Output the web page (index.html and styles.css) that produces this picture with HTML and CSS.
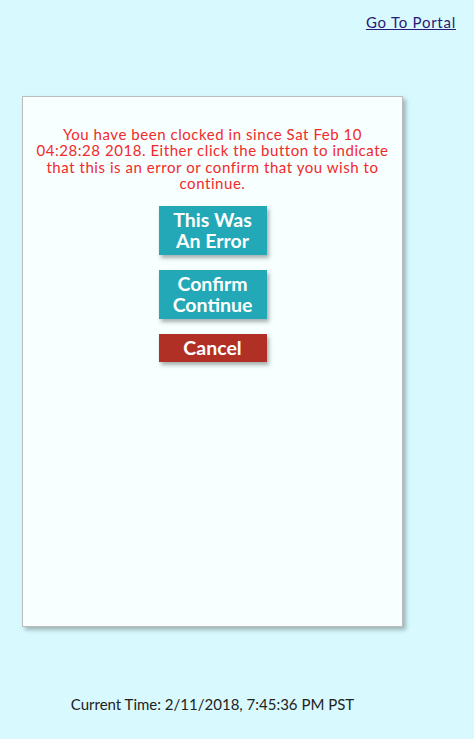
FILE: index.html
```html
<!DOCTYPE html>
<html>
<head>
<meta charset="utf-8">
<link rel="stylesheet" href="styles.css">
</head>
<body>
<header class="top">
  <a class="portal" href="#">Go To Portal</a>
</header>
<main class="wrap">
  <section class="card">
    <p class="msg">You have been clocked in since Sat Feb 10<br>04:28:28 2018. Either click the button to indicate<br>that this is an error or confirm that you wish to<br>continue.</p>
    <div class="actions">
      <button class="btn teal">This Was<br>An Error</button>
      <button class="btn teal">Confirm<br>Continue</button>
      <button class="btn red">Cancel</button>
    </div>
  </section>
  <footer class="time">Current Time: 2/11/2018, 7:45:36 PM PST</footer>
</main>
</body>
</html>
```
FILE: styles.css
```css
html, body {
  margin: 0;
  padding: 0;
  background: #d8f9fd;
  font-family: Lato, "Open Sans", sans-serif;
}
.top {
  display: flex;
  justify-content: flex-end;
  padding: 13px 18px 0 0;
  height: 83px;
  box-sizing: border-box;
}
.portal {
  color: #2a1a78;
  font-size: 15px;
  letter-spacing: 0.75px;
  line-height: 18px;
}
.wrap {
  width: 381px;
  margin-left: 22px;
  display: flex;
  flex-direction: column;
  align-items: stretch;
}
.card {
  margin-top: 13px;
  height: 531px;
  box-sizing: border-box;
  background: #f7ffff;
  border: 1px solid #bcbcbc;
  box-shadow: 3px 3px 4px rgba(120, 140, 140, 0.6);
  padding: 29px 0 0;
}
.msg {
  margin: 0;
  color: #f22a2a;
  font-size: 15px;
  letter-spacing: 0.55px;
  line-height: 16.3px;
  text-align: center;
  white-space: nowrap;
}
.actions {
  margin-top: 15px;
  display: flex;
  flex-direction: column;
  align-items: center;
  gap: 15px;
}
.btn {
  width: 108px;
  border: none;
  color: #fff;
  font-family: inherit;
  font-weight: 700;
  font-size: 19.5px;
  line-height: 21px;
  padding: 3px 0 4px;
  box-shadow: 2px 3px 4px rgba(100, 110, 110, 0.55);
  cursor: pointer;
}
.teal { background: #22a8b6; }
.red { background: #b13026; }
.time {
  margin-top: 68px;
  text-align: center;
  color: #222;
  font-size: 15px;
  letter-spacing: 0;
}
```
